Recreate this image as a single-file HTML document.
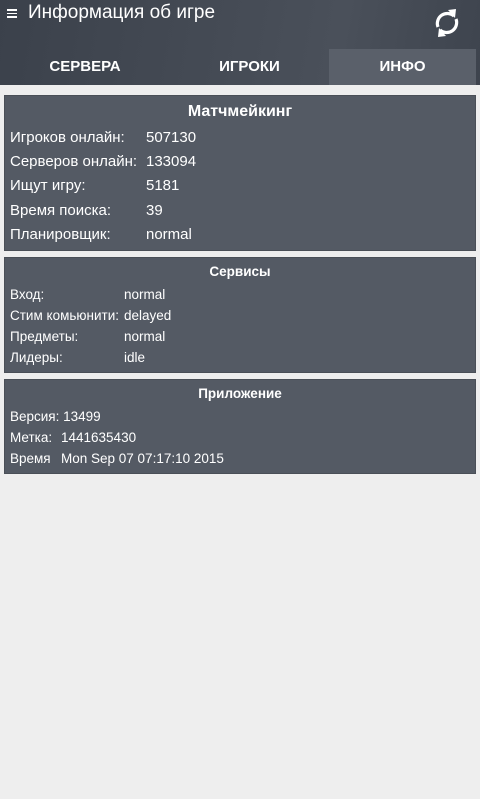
<!DOCTYPE html>
<html><head><meta charset="utf-8"><style>
*{margin:0;padding:0;box-sizing:border-box}
body{width:480px;height:799px;background:#eeeeee;font-family:"Liberation Sans",sans-serif;color:#fff;position:relative;overflow:hidden}
.hdr{position:absolute;left:0;top:0;width:480px;height:85px;background:linear-gradient(100deg,#3b414b,#4a505a 70%,#3e444e)}
.title{position:absolute;left:28px;top:2px;font-size:19px;line-height:22px}
.menu{position:absolute;left:7px;top:9px;width:10px}
.menu i{display:block;height:1.5px;background:#fff;margin-bottom:2px}
.tab{position:absolute;top:49px;height:36px;line-height:36px;font-weight:bold;font-size:15px;text-align:center}
.panel{position:absolute;left:4px;width:472px;background:#545a64;border:1px solid #4a4f57}
.row{position:absolute;white-space:nowrap}
.ct{position:absolute;left:0;width:100%;text-align:center;font-weight:bold}
</style></head><body>
<div class="hdr">
<div class="menu"><i></i><i></i><i></i></div>
<div class="title">Информация об игре</div>
<svg style="position:absolute;left:432px;top:7px" width="30" height="32" viewBox="0 0 30 32"><path d="M22 9 A10 10 0 0 0 6 20" fill="none" stroke="#fff" stroke-width="3.2"/><path d="M16 3 L24 2 L23 11 Z" fill="#fff"/><path d="M8 23 A10 10 0 0 0 24 12" fill="none" stroke="#fff" stroke-width="3.2"/><path d="M14 29 L6 30 L7 21 Z" fill="#fff"/></svg>
<div class="tab" style="left:0;width:170px">СЕРВЕРА</div>
<div class="tab" style="left:170px;width:159px">ИГРОКИ</div>
<div class="tab" style="left:329px;width:147px;background:#5a606a">ИНФО</div>
</div>

<div class="panel" style="top:95px;height:156px;font-size:15px">
<div class="ct" style="top:7px;font-size:16px">Матчмейкинг</div>
<div class="row" style="left:5px;top:33px">Игроков онлайн:</div><div class="row" style="left:141px;top:33px">507130</div>
<div class="row" style="left:5px;top:57px">Серверов онлайн:</div><div class="row" style="left:141px;top:57px">133094</div>
<div class="row" style="left:5px;top:81px">Ищут игру:</div><div class="row" style="left:141px;top:81px">5181</div>
<div class="row" style="left:5px;top:106px">Время поиска:</div><div class="row" style="left:141px;top:106px">39</div>
<div class="row" style="left:5px;top:130px">Планировщик:</div><div class="row" style="left:141px;top:130px">normal</div>
</div>

<div class="panel" style="top:257px;height:116px;font-size:13.5px">
<div class="ct" style="top:6px;font-size:13.5px">Сервисы</div>
<div class="row" style="left:5px;top:29px">Вход:</div><div class="row" style="left:119px;top:29px">normal</div>
<div class="row" style="left:5px;top:50px">Стим комьюнити:</div><div class="row" style="left:119px;top:50px">delayed</div>
<div class="row" style="left:5px;top:71px">Предметы:</div><div class="row" style="left:119px;top:71px">normal</div>
<div class="row" style="left:5px;top:92px">Лидеры:</div><div class="row" style="left:119px;top:92px">idle</div>
</div>

<div class="panel" style="top:379px;height:95px;font-size:13.5px">
<div class="ct" style="top:6px;font-size:13.5px">Приложение</div>
<div class="row" style="left:5px;top:29px">Версия: 13499</div>
<div class="row" style="left:5px;top:50px">Метка:</div><div class="row" style="left:56px;top:50px">1441635430</div>
<div class="row" style="left:5px;top:71px">Время</div><div class="row" style="left:56px;top:71px">Mon Sep 07 07:17:10 2015</div>
</div>
</body></html>
